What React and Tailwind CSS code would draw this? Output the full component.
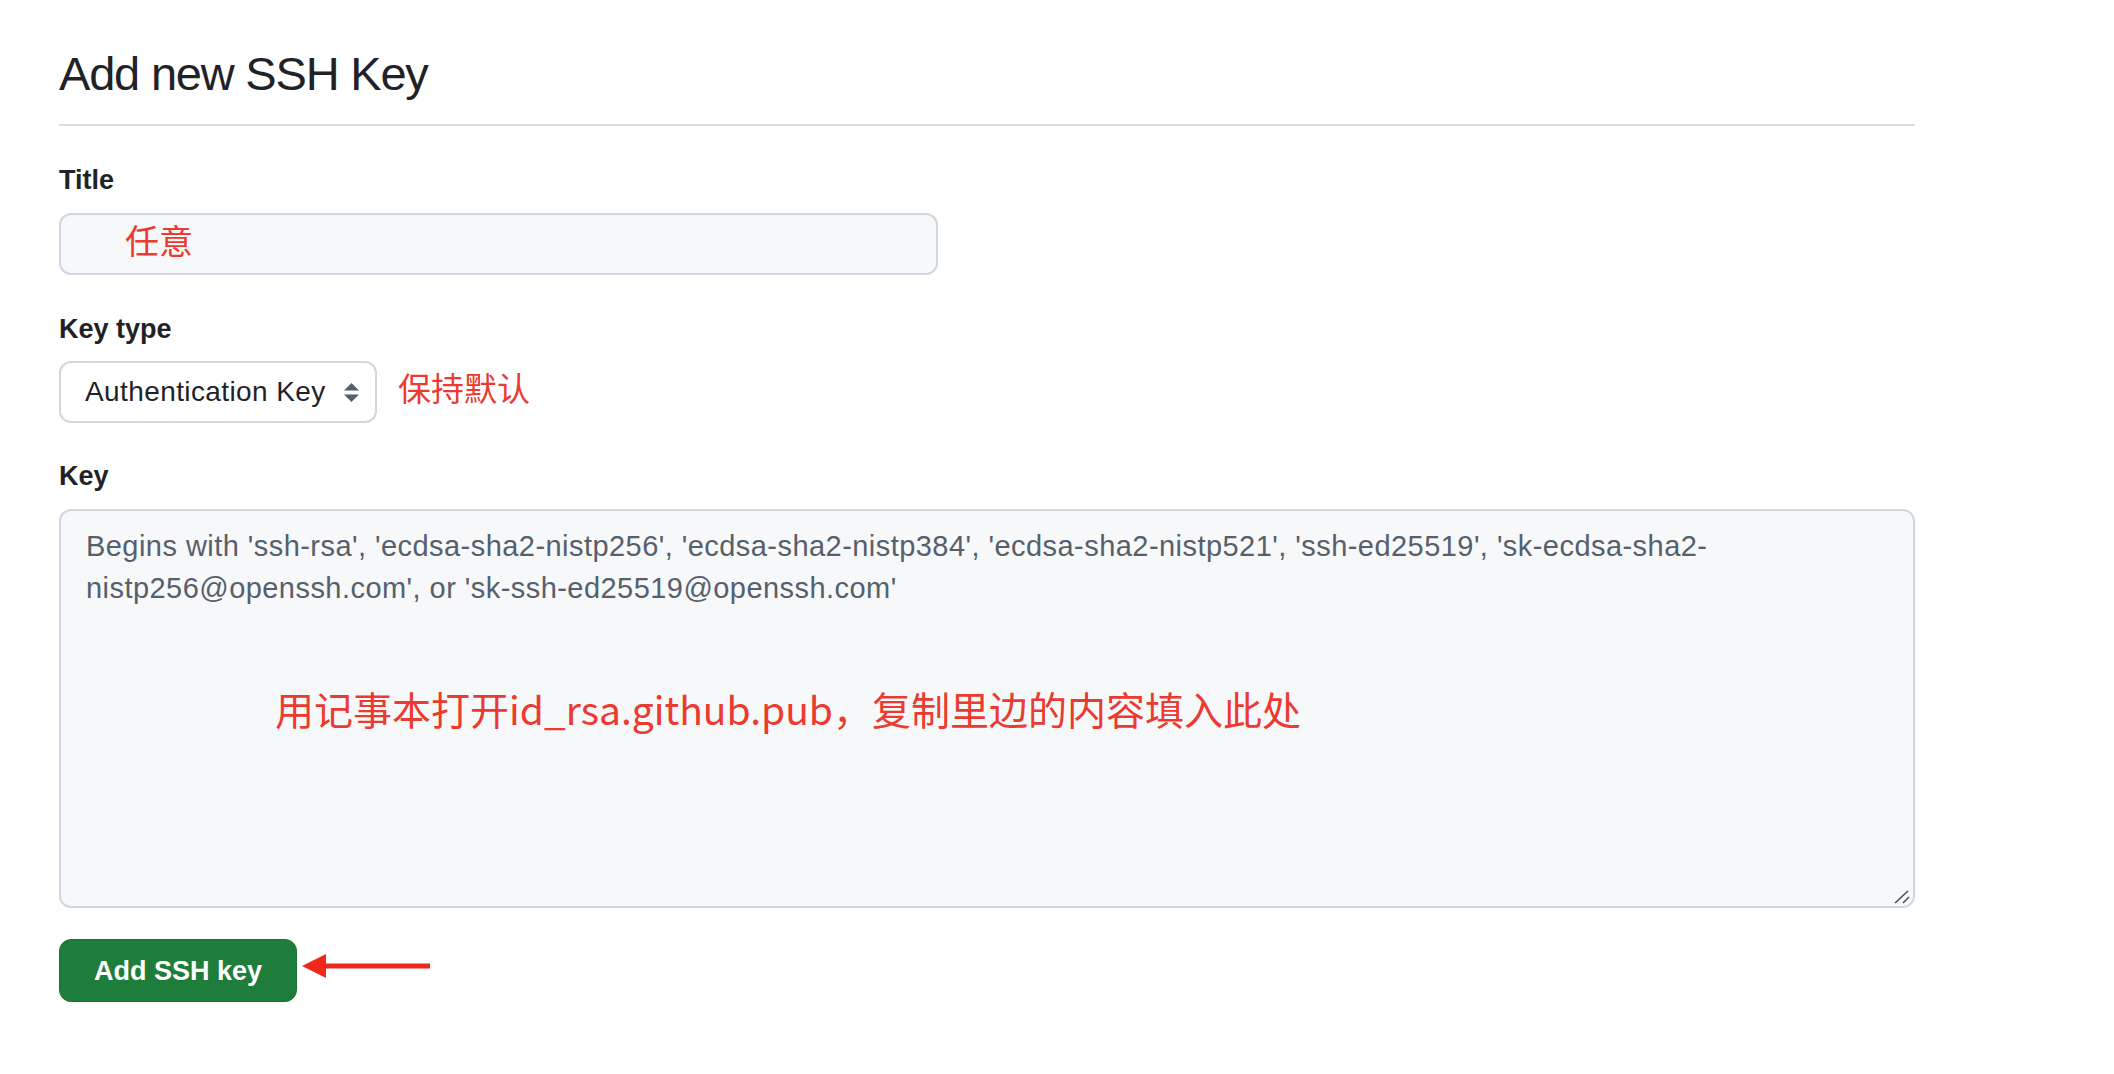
export default function App() {
  const note = "font-['Noto_Sans_CJK_SC',sans-serif] text-[#eb3a2f]";

  return (
    <div className="min-h-screen bg-white font-['Liberation_Sans',Arial,sans-serif] text-[#1f2328]">
      <div className="ml-[59px] w-[1856px] pt-[47px]">
        {/* Subhead */}
        <h2 className="text-[47px] leading-[54px] font-normal tracking-[-1.2px] pb-[23px] border-b-2 border-[#d8dee4]">
          Add new SSH Key
        </h2>

        {/* Title */}
        <label className="block mt-[36px] text-[27px] leading-[36px] font-bold">Title</label>
        <div className="mt-[15px] flex items-center h-[62px] w-[879px] rounded-[12px] border-2 border-[#d0d7de] bg-[#f6f8fa] pl-[64px] pb-[8px]">
          <span className={`${note} text-[34px] leading-[40px]`}>任意</span>
        </div>

        {/* Key type */}
        <label className="block mt-[36px] text-[27px] leading-[36px] font-bold">Key type</label>
        <div className="mt-[14px] flex items-center gap-[21px]">
          <div className="flex items-center justify-between h-[62px] w-[318px] rounded-[12px] border-2 border-[#d0d7de] bg-white pl-[24px] pr-[16px]">
            <span className="text-[28px] tracking-[0.4px] leading-[36px]">Authentication Key</span>
            <svg width="15" height="21" viewBox="0 0 15 21" className="text-[#57606a]">
              <polygon points="0,8.5 7.5,1 15,8.5" fill="currentColor" />
              <polygon points="0,12.5 7.5,20 15,12.5" fill="currentColor" />
            </svg>
          </div>
          <span className={`${note} text-[33px] leading-[40px] -mt-[11px]`}>保持默认</span>
        </div>

        {/* Key */}
        <label className="block mt-[35px] text-[27px] leading-[36px] font-bold">Key</label>
        <div className="relative mt-[15px] h-[399px] w-[1856px] rounded-[12px] border-2 border-[#d0d7de] bg-[#f6f8fa] pl-[25px] pt-[14px]">
          <div className="text-[29px] tracking-[0.45px] leading-[42px] text-[#57606a] whitespace-nowrap">
            <div>Begins with 'ssh-rsa', 'ecdsa-sha2-nistp256', 'ecdsa-sha2-nistp384', 'ecdsa-sha2-nistp521', 'ssh-ed25519', 'sk-ecdsa-sha2-</div>
            <div>nistp256@openssh.com', or 'sk-ssh-ed25519@openssh.com'</div>
          </div>
          <div className={`${note} mt-[71px] ml-[189px] text-[39px] leading-[56px] whitespace-nowrap`}>
            用记事本打开id_rsa.github.pub，复制里边的内容填入此处
          </div>
          <svg width="16" height="14" viewBox="0 0 16 14" className="absolute right-[3px] bottom-[2px] text-[#4b5058]">
            <line x1="1" y1="13" x2="14" y2="1" stroke="currentColor" strokeWidth="1.6" />
            <line x1="9" y1="13" x2="15" y2="7" stroke="currentColor" strokeWidth="1.6" />
          </svg>
        </div>

        {/* Submit */}
        <div className="mt-[31px] flex items-start">
          <button className="h-[63px] w-[238px] rounded-[12px] border border-[#1b7033] bg-[#1f7d3b] text-white text-[27px] font-bold leading-[36px]">
            Add SSH key
          </button>
          <svg width="130" height="26" viewBox="0 0 130 26" className="ml-[5px] mt-[14px]">
            <polygon points="0,13 24,1 24,25" fill="#f0281a" />
            <rect x="20" y="10.5" width="108" height="5" fill="#f0281a" />
          </svg>
        </div>
      </div>
    </div>
  );
}
